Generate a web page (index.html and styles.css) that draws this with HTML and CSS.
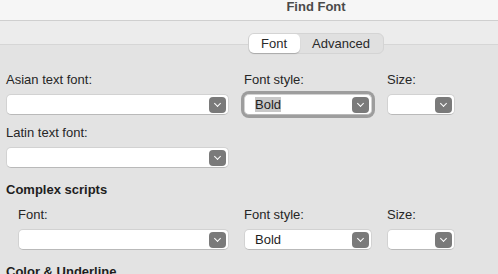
FILE: index.html
```html
<!DOCTYPE html>
<html lang="en">
<head>
  <meta charset="UTF-8">
  <title>Find Font</title>
  <link rel="stylesheet" href="styles.css">
</head>
<body>
  <div class="window">
    <div class="titlebar">Find Font</div>

    <div class="tabbar">
      <div class="segmented">
        <span class="seg active">Font</span>
        <span class="seg">Advanced</span>
      </div>
    </div>

    <div class="panel">
      <div class="grid">
        <div class="field col1">
          <label>Asian text font:</label>
          <div class="select"><span class="value"></span><span class="chev"></span></div>
        </div>
        <div class="field col2">
          <label>Font style:</label>
          <div class="select focused"><span class="value"><span class="sel-text">Bold</span></span><span class="chev"></span></div>
        </div>
        <div class="field col3">
          <label>Size:</label>
          <div class="select"><span class="value"></span><span class="chev"></span></div>
        </div>
        <div class="field col1">
          <label>Latin text font:</label>
          <div class="select"><span class="value"></span><span class="chev"></span></div>
        </div>
      </div>

      <h3 class="section">Complex scripts</h3>
      <div class="grid indented">
        <div class="field col1">
          <label>Font:</label>
          <div class="select"><span class="value"></span><span class="chev"></span></div>
        </div>
        <div class="field col2">
          <label>Font style:</label>
          <div class="select"><span class="value">Bold</span><span class="chev"></span></div>
        </div>
        <div class="field col3">
          <label>Size:</label>
          <div class="select"><span class="value"></span><span class="chev"></span></div>
        </div>
      </div>

      <h3 class="section">Color &amp; Underline</h3>
    </div>
  </div>
</body>
</html>
```

FILE: styles.css
```css
* {
  box-sizing: border-box;
}

html, body {
  margin: 0;
  height: 100%;
  overflow: hidden;
  background: #e3e3e3;
  font-family: "Liberation Sans", Arial, sans-serif;
  font-size: 13px;
  color: #262626;
}

/* the window is wider than the shot; centre things on x = 316 */
.titlebar {
  height: 21px;
  padding-left: 134px;
  background: #f6f6f6;
  border-bottom: 1px solid #cfcfcf;
  text-align: center;
  font-weight: bold;
  font-size: 13px;
  line-height: 14px;
  color: #4a4a4a;
}

.tabbar {
  position: relative;
  display: flex;
  justify-content: center;
  height: 33px;
  padding: 12px 0 0 133px;
}

.tabbar::before {
  content: "";
  position: absolute;
  left: 0;
  right: 0;
  top: 0;
  height: 23px;
  background: #ececec;
  border-bottom: 1px solid #d6d6d6;
}

.segmented {
  position: relative;
  display: flex;
  height: 21px;
  background: #e0e0e0;
  border: 1px solid #d4d4d4;
  border-radius: 6px;
}

.seg {
  line-height: 19px;
  text-align: center;
  color: #2a2a2a;
}

.seg.active {
  width: 51px;
  background: #fff;
  border-radius: 5px;
  box-shadow: 0 1px 1px rgba(0, 0, 0, 0.2);
}

.seg + .seg {
  width: 83px;
}

.panel {
  padding: 18px 0 0 6px;
}

.grid {
  display: grid;
  grid-template-columns: 223px 128px 68px;
  column-gap: 15px;
  row-gap: 10px;
}

.grid.indented {
  padding-left: 12px;
  grid-template-columns: 211px 128px 68px;
}

.field label {
  display: block;
  height: 16px;
  line-height: 16px;
  margin-bottom: 6px;
}

.select {
  display: flex;
  align-items: center;
  height: 21px;
  padding: 0 2px 0 10px;
  background: #fff;
  border: 1px solid #d2d2d2;
  border-bottom-color: #b9b9b9;
  border-radius: 5px;
}

.select.focused {
  box-shadow: 0 0 0 3px #9d9d9d;
}

.value {
  flex: 1;
  line-height: 17px;
  color: #1e1e1e;
}

.sel-text {
  background: #c8c8c8;
}

.chev {
  position: relative;
  width: 17px;
  height: 16px;
  border-radius: 4px;
  background: #7a7a7a;
}

.chev::after {
  content: "";
  position: absolute;
  left: 6px;
  top: 4px;
  width: 4px;
  height: 4px;
  border-right: 1.5px solid #fff;
  border-bottom: 1.5px solid #fff;
  transform: rotate(45deg);
}

.section {
  margin: 14px 0 0;
  font-size: 13px;
  font-weight: bold;
  line-height: 16px;
  color: #1e1e1e;
}

.section + .grid {
  margin-top: 9px;
}
```
